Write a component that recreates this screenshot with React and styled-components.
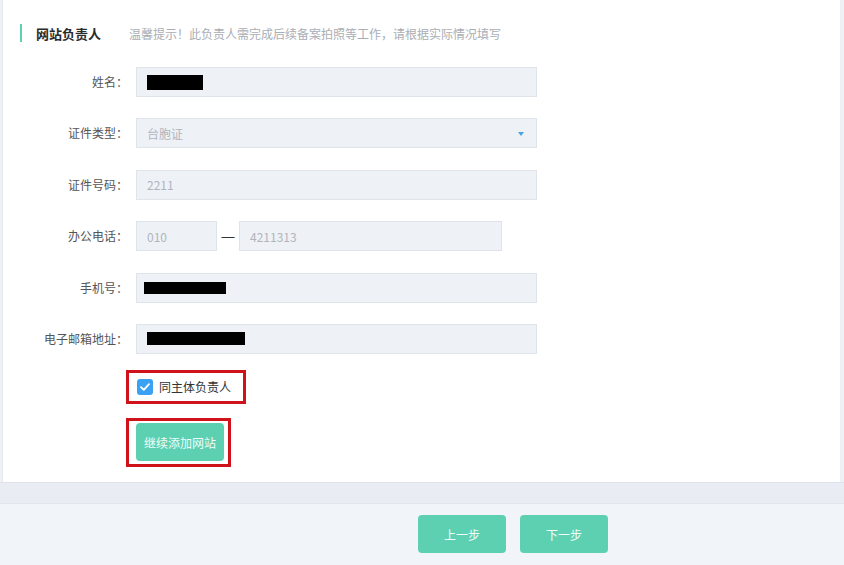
import React from 'react';
import styled, { createGlobalStyle } from 'styled-components';

const GlobalStyle = createGlobalStyle`
  html, body {
    margin: 0;
    padding: 0;
    background: #eef1f6;
  }
  body {
    font-family: "Noto Sans CJK SC", "Noto Sans", "Liberation Sans", sans-serif;
  }
`;

const Page = styled.div`
  width: 844px;
  height: 565px;
  display: flex;
  flex-direction: column;
  overflow: hidden;
`;

const Card = styled.div`
  height: 482px;
  box-sizing: border-box;
  margin: 0 3px 0 2px;
  background: #fff;
  border-left: 1px solid #e6e9ee;
  border-right: 1px solid #eceff3;
  padding-top: 24px;
`;

const Band = styled.div`
  height: 21px;
  box-sizing: border-box;
  background: #e9edf3;
  border-top: 1px solid #dfe4eb;
`;

const Footer = styled.div`
  flex: 1;
  display: flex;
  gap: 14px;
  padding: 11px 0 0 418px;
  background: #f1f4f9;
  border-top: 1px solid #e1e6ed;
`;

const SectionHead = styled.div`
  display: flex;
  align-items: center;
  height: 18px;
  margin-left: 17px;
  padding-left: 14px;
  border-left: 2px solid #5fd0b3;
`;

const SectionTitle = styled.span`
  font-size: 13px;
  font-weight: bold;
  color: #2b2b2b;
`;

const Hint = styled.span`
  margin-left: 28px;
  font-size: 12px;
  color: #a9aeb5;
`;

const Form = styled.div`
  display: grid;
  grid-template-columns: 125px auto;
  column-gap: 8px;
  row-gap: 21.4px;
  margin-top: 25px;
  justify-content: start;
`;

const Label = styled.label`
  font-size: 12px;
  color: #555;
  text-align: right;
  line-height: 30px;
  height: 30px;
`;

const Field = styled.div`
  position: relative;
  display: flex;
  align-items: center;
  width: ${({ $w }) => $w || 401}px;
  height: 30px;
  box-sizing: border-box;
  padding-left: 10px;
  background: #eef1f6;
  border: 1px solid #dfe3ea;
  font-size: 12px;
  color: #b0b5bd;
`;

const Arrow = styled.span`
  position: absolute;
  right: 12px;
  top: 13px;
  width: 0;
  height: 0;
  border-left: 3.5px solid transparent;
  border-right: 3.5px solid transparent;
  border-top: 4px solid #4aa3e0;
`;

const Redact = styled.span`
  display: inline-block;
  width: ${({ $w }) => $w}px;
  height: ${({ $h }) => $h || 14}px;
  margin-left: ${({ $ml }) => $ml || 0}px;
  background: #000;
`;

const PhoneGroup = styled.div`
  display: flex;
  align-items: center;
`;

const Dash = styled.span`
  width: 22px;
  text-align: center;
  font-family: "Liberation Sans", sans-serif;
  font-size: 13px;
  color: #333;
`;

const Extras = styled.div`
  display: flex;
  flex-direction: column;
  align-items: flex-start;
  gap: 14px;
  margin: 16px 0 0 123px;
`;

const Highlight = styled.div`
  display: flex;
  align-items: center;
  box-sizing: border-box;
  border: 3px solid #d0121b;
  padding: ${({ $pad }) => $pad};
  width: ${({ $w }) => $w}px;
  height: ${({ $h }) => $h}px;
`;

const CheckBox = styled.span`
  display: inline-flex;
  align-items: center;
  justify-content: center;
  width: 16px;
  height: 16px;
  border-radius: 3px;
  background: #3ba1f2;
`;

const CheckText = styled.span`
  margin-left: 6px;
  font-size: 12px;
  color: #333;
`;

const Button = styled.button`
  width: 88px;
  height: 38px;
  border: none;
  border-radius: 4px;
  background: #5ed0b2;
  color: #effcf8;
  font-family: inherit;
  font-size: 12px;
  padding: 0;
  cursor: pointer;
`;

export default function App() {
  return (
    <>
      <GlobalStyle />
      <Page>
        <Card>
          <SectionHead>
            <SectionTitle>网站负责人</SectionTitle>
            <Hint>温馨提示！此负责人需完成后续备案拍照等工作，请根据实际情况填写</Hint>
          </SectionHead>

          <Form>
            <Label>姓名：</Label>
            <Field>
              <Redact $w={56} $h={15} />
            </Field>

            <Label>证件类型：</Label>
            <Field>
              台胞证
              <Arrow />
            </Field>

            <Label>证件号码：</Label>
            <Field>2211</Field>

            <Label>办公电话：</Label>
            <PhoneGroup>
              <Field $w={81}>010</Field>
              <Dash>—</Dash>
              <Field $w={263}>4211313</Field>
            </PhoneGroup>

            <Label>手机号：</Label>
            <Field>
              <Redact $w={82} $h={12} $ml={-3} />
            </Field>

            <Label>电子邮箱地址：</Label>
            <Field>
              <Redact $w={98} $h={13} />
            </Field>
          </Form>

          <Extras>
            <Highlight $w={120} $h={34} $pad="0 0 0 8px">
              <CheckBox>
                <svg width="10" height="8" viewBox="0 0 10 8">
                  <path d="M1 4.2 L3.8 6.8 L9 1.2" fill="none" stroke="#fff" strokeWidth="1.8" strokeLinecap="round" strokeLinejoin="round" />
                </svg>
              </CheckBox>
              <CheckText>同主体负责人</CheckText>
            </Highlight>
            <Highlight $w={105} $h={49} $pad="0 0 0 7px">
              <Button>继续添加网站</Button>
            </Highlight>
          </Extras>
        </Card>
        <Band />
        <Footer>
          <Button>上一步</Button>
          <Button>下一步</Button>
        </Footer>
      </Page>
    </>
  );
}
